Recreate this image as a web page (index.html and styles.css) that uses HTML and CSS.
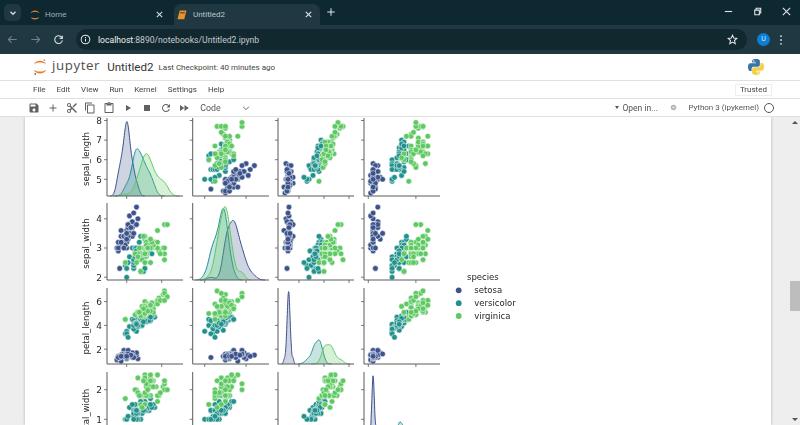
FILE: index.html
```html
<!DOCTYPE html>
<html lang="en">
<head>
    <meta charset="UTF-8">
    <title>Untitled2 - Jupyter Notebook</title>
    <link rel="stylesheet" href="styles.css">
</head>
<body>
    <!-- Browser tabs -->
    <div class="tabstrip">
        <div class="tab-search">
            <svg class="icon-sm" viewBox="0 0 12 12"><path d="M3 4.5l3 3 3-3" fill="none" stroke="#d5dcde" stroke-width="1.6"/></svg>
        </div>
        <div class="tab">
            <svg class="tab-icon" viewBox="0 0 16 16">
                <path d="M2 5.5C4 1 12 1 14 5.5 11.5 3.5 4.5 3.5 2 5.5Z" fill="#d9782d"/>
                <path d="M2 10.5C4 15 12 15 14 10.5 11.5 12.5 4.5 12.5 2 10.5Z" fill="#d9782d"/>
            </svg>
            <span class="tab-title">Home</span>
            <svg class="tab-close" viewBox="0 0 10 10"><path d="M2 2l6 6M8 2l-6 6" stroke="#d5dcde" stroke-width="1.2"/></svg>
        </div>
        <div class="tab active">
            <svg class="tab-icon" viewBox="0 0 16 16">
                <path d="M5 2h9l-3 11.5H2Z" fill="#e8912d"/>
                <path d="M6 4h6l-.5 2h-6Z" fill="#8a5218"/>
            </svg>
            <span class="tab-title">Untitled2</span>
            <svg class="tab-close" viewBox="0 0 10 10"><path d="M2 2l6 6M8 2l-6 6" stroke="#e3e8ea" stroke-width="1.2"/></svg>
        </div>
        <svg class="new-tab" viewBox="0 0 12 12"><path d="M6 1.5v9M1.5 6h9" stroke="#e3e8ea" stroke-width="1.2"/></svg>
        <div class="window-buttons">
            <svg viewBox="0 0 12 12"><path d="M2 6h8" stroke="#dfe5e7" stroke-width="1.2"/></svg>
            <svg viewBox="0 0 12 12"><path d="M3 4.5h5v5H3ZM4.5 4.5V2.500h5v5H8" fill="none" stroke="#dfe5e7" stroke-width="1.2"/></svg>
            <svg viewBox="0 0 12 12"><path d="M2 2l8 8M10 2l-8 8" stroke="#dfe5e7" stroke-width="1.2"/></svg>
        </div>
    </div>

    <!-- Browser toolbar -->
    <div class="addressbar">
        <div class="nav-buttons">
            <svg viewBox="0 0 12 12"><path d="M10.5 6h-9M5 2.500L1.500 6 5 9.500" fill="none" stroke="#71848b" stroke-width="1.2"/></svg>
            <svg viewBox="0 0 12 12"><path d="M1.500 6h9M7 2.500L10.500 6 7 9.500" fill="none" stroke="#71848b" stroke-width="1.2"/></svg>
            <svg viewBox="0 0 12 12"><path d="M9.800 4.200A4.200 4.200 0 1 0 10.200 7M10.200 1.800v3h-3" fill="none" stroke="#d5dcde" stroke-width="1.2"/></svg>
        </div>
        <div class="url-pill">
            <svg class="info" viewBox="0 0 12 12"><circle cx="6" cy="6" r="4.7" fill="none" stroke="#e3e8ea" stroke-width="1.1"/><path d="M6 5.300v3M6 3.400v1" stroke="#e3e8ea" stroke-width="1.1"/></svg>
            <span class="url"><b>localhost</b>:8890/notebooks/Untitled2.ipynb</span>
            <svg class="star" viewBox="0 0 12 12"><path d="M6 1.300l1.400 3.200 3.400.3-2.600 2.300.8 3.400L6 8.700l-3 1.800.8-3.400L1.200 4.800l3.400-.3Z" fill="none" stroke="#e3e8ea" stroke-width="1.1"/></svg>
        </div>
        <div class="avatar">U</div>
        <svg class="kebab" viewBox="0 0 4 14"><circle cx="2" cy="2.5" r="1.1"/><circle cx="2" cy="7" r="1.1"/><circle cx="2" cy="11.5" r="1.1"/></svg>
    </div>

    <!-- Notebook header -->
    <header class="nb-header">
        <svg class="jp-mark" viewBox="0 0 16 20">
            <path d="M1 7C3 1.500 13 1.500 15 7 12 4.300 4 4.300 1 7Z" fill="#f37726"/>
            <path d="M1 13C3 18.800 13 18.800 15 13 12 15.800 4 15.800 1 13Z" fill="#f37726"/>
            <circle cx="13" cy="2" r="1" fill="#9e9e9e"/>
            <circle cx="2.5" cy="18" r="1.1" fill="#767677"/>
        </svg>
        <span class="jp-word">jupyter</span>
        <span class="nb-title">Untitled2</span>
        <span class="checkpoint">Last Checkpoint: 40 minutes ago</span>
        <svg class="py-logo" viewBox="0 0 110 110">
            <path fill="#3a75a8" d="M54.900 0C26.800 0 28.600 12.200 28.600 12.200v12.600h26.800v3.800H17.900S0 26.600 0 54.800s15.600 27.200 15.600 27.200h9.300V68.900s-.5-15.600 15.400-15.600h26.500s14.900.2 14.900-14.400V14.700S84 0 54.900 0zM40.100 8.500a4.800 4.800 0 1 1 0 9.600 4.800 4.800 0 0 1 0-9.600z"/>
            <path fill="#f5cf4b" transform="rotate(180 55 55)" d="M54.900 0C26.800 0 28.600 12.200 28.600 12.200v12.600h26.800v3.800H17.900S0 26.600 0 54.800s15.600 27.200 15.600 27.200h9.300V68.900s-.5-15.600 15.400-15.600h26.500s14.900.2 14.900-14.400V14.700S84 0 54.900 0zM40.100 8.500a4.800 4.800 0 1 1 0 9.600 4.800 4.800 0 0 1 0-9.600z"/>
        </svg>
    </header>

    <nav class="menu">
        <a>File</a>
        <a>Edit</a>
        <a>View</a>
        <a>Run</a>
        <a>Kernel</a>
        <a>Settings</a>
        <a>Help</a>
        <span class="trusted">Trusted</span>
    </nav>

    <div class="nb-toolbar">
        <svg class="tool" viewBox="0 0 24 24"><path d="M17 3H5c-1.100 0-2 .9-2 2v14c0 1.100.9 2 2 2h14c1.100 0 2-.9 2-2V7l-4-4zm-5 16c-1.700 0-3-1.300-3-3s1.300-3 3-3 3 1.300 3 3-1.300 3-3 3zm3-10H5V5h10v4z"/></svg>
        <svg class="tool" viewBox="0 0 24 24"><path d="M19 13h-6v6h-2v-6H5v-2h6V5h2v6h6v2z"/></svg>
        <svg class="tool" viewBox="0 0 24 24"><path d="M9.640 7.640c.23-.5.36-1.050.36-1.640 0-2.210-1.790-4-4-4S2 3.790 2 6s1.790 4 4 4c.59 0 1.140-.13 1.640-.36L10 12l-2.360 2.360C7.140 14.130 6.590 14 6 14c-2.210 0-4 1.790-4 4s1.790 4 4 4 4-1.790 4-4c0-.59-.13-1.140-.36-1.640L12 14l7 7h3v-1L9.640 7.640zM6 8c-1.100 0-2-.89-2-2s.9-2 2-2 2 .89 2 2-.9 2-2 2zm0 12c-1.100 0-2-.89-2-2s.9-2 2-2 2 .89 2 2-.9 2-2 2zm13-17l-6 6 2 2 7-7V3h-3z"/></svg>
        <svg class="tool" viewBox="0 0 24 24"><path d="M16 1H4c-1.100 0-2 .9-2 2v14h2V3h12V1zm3 4H8c-1.100 0-2 .9-2 2v14c0 1.100.9 2 2 2h11c1.100 0 2-.9 2-2V7c0-1.100-.9-2-2-2zm0 16H8V7h11v14z"/></svg>
        <svg class="tool" viewBox="0 0 24 24"><path d="M19 2h-4.180C14.400.84 13.300 0 12 0c-1.300 0-2.400.84-2.820 2H5c-1.100 0-2 .9-2 2v16c0 1.100.9 2 2 2h14c1.100 0 2-.9 2-2V4c0-1.100-.9-2-2-2zm-7 0c.55 0 1 .45 1 1s-.45 1-1 1-1-.45-1-1 .45-1 1-1zm7 18H5V4h2v3h10V4h2v16z"/></svg>
        <svg class="tool" viewBox="0 0 24 24"><path d="M8 6v12l10-6z"/></svg>
        <svg class="tool" viewBox="0 0 24 24"><path d="M6 6h12v12H6z"/></svg>
        <svg class="tool" viewBox="0 0 24 24"><path d="M17.650 6.350C16.200 4.900 14.210 4 12 4c-4.420 0-7.990 3.580-7.990 8s3.570 8 7.990 8c3.730 0 6.840-2.550 7.730-6h-2.080c-.82 2.330-3.040 4-5.650 4-3.310 0-6-2.690-6-6s2.690-6 6-6c1.660 0 3.140.69 4.220 1.780L13 11h7V4l-2.350 2.350z"/></svg>
        <svg class="tool" viewBox="0 0 24 24"><path d="M4 18l8.500-6L4 6v12zm9-12v12l8.500-6L13 6z"/></svg>
        <span class="cell-type">Code</span>
        <svg class="cell-chevron" viewBox="0 0 12 12"><path d="M2.500 4.500L6 8l3.500-3.500" fill="none" stroke="#616161" stroke-width="1.1"/></svg>
        <span class="open-in"><i class="caret"></i>Open in...</span>
        <svg class="settings-dot" viewBox="0 0 12 12"><circle cx="6" cy="6" r="3.7" fill="#b5b5b5"/><circle cx="6" cy="6" r="1.4" fill="#e8e8e8"/></svg>
        <span class="kernel">Python 3 (ipykernel)</span>
        <span class="kernel-status"></span>
    </div>

    <!-- Notebook body -->
    <main class="nb-main">
        <div class="nb-sheet">
            <svg id="pairplot" class="pairplot" viewBox="70 117 470 308"></svg>
        </div>
        <div class="scrollbar">
            <i class="arrow up"></i>
            <div class="track"><div class="thumb"></div></div>
            <i class="arrow down"></i>
        </div>
    </main>

    <script src="plot.js"></script>
</body>
</html>
```

FILE: styles.css
```css
* {
    box-sizing: border-box;
}

html, body {
    height: 100%;
}

body {
    margin: 0;
    display: flex;
    flex-direction: column;
    overflow: hidden;
    font-family: Roboto, "Noto Sans", sans-serif;
    background-color: #fff;
    filter: blur(0.35px);
}

/* Browser tabs */
.tabstrip {
    height: 25px;
    display: flex;
    align-items: flex-end;
    padding-left: 4px;
    background-color: #0e2831;
}

.tab-search {
    width: 17px;
    height: 17px;
    margin-bottom: 4px;
    display: flex;
    align-items: center;
    justify-content: center;
    border-radius: 5px;
    background-color: #1f3842;
}

.icon-sm {
    width: 10px;
    height: 10px;
}

.tab {
    width: 145px;
    height: 21px;
    display: flex;
    align-items: center;
    padding: 0 10px 0 0;
    margin-left: 8px;
    color: #9fb0b6;
    font-size: 8px;
}

.tab + .tab {
    margin-left: 0;
}

.tab.active {
    width: 146px;
    padding: 0 7px 0 2px;
    color: #bcc8cc;
    background-color: #1f3842;
    border-radius: 7px 7px 0 0;
}

.tab-icon {
    width: 12px;
    height: 12px;
    flex: none;
}

.tab-title {
    margin-left: 4px;
    flex: 1;
}

.tab.active .tab-title {
    margin-left: 5px;
}

.tab-close {
    width: 9px;
    height: 9px;
    flex: none;
}

.new-tab {
    width: 10px;
    height: 10px;
    margin: 0 0 8px 6px;
}

.window-buttons {
    margin: 0 8px 8px auto;
    display: flex;
    gap: 18px;
}

.window-buttons svg {
    width: 11px;
    height: 11px;
}

/* Browser toolbar */
.addressbar {
    height: 29px;
    display: flex;
    align-items: center;
    background-color: #1f3842;
}

.nav-buttons {
    width: 76px;
    display: flex;
    gap: 12px;
    padding-left: 7px;
}

.nav-buttons svg {
    width: 11px;
    height: 11px;
}

.url-pill {
    width: 671px;
    height: 21px;
    display: flex;
    align-items: center;
    padding: 0 9px 0 4px;
    border-radius: 11px;
    background-color: #11282f;
}

.info {
    width: 11px;
    height: 11px;
}

.url {
    margin-left: 7px;
    flex: 1;
    color: #c2cccf;
    font-size: 8.6px;
}

.url b {
    font-weight: 400;
    color: #eef1f2;
}

.star {
    width: 11px;
    height: 11px;
}

.avatar {
    width: 13px;
    height: 13px;
    margin-left: 10px;
    border-radius: 50%;
    background-color: #0b7fd4;
    color: #dff1ff;
    font-size: 7px;
    line-height: 13px;
    text-align: center;
}

.kebab {
    width: 4px;
    height: 12px;
    margin-left: 9px;
    fill: #cfd8db;
}

/* Notebook header */
.nb-header {
    height: 27px;
    display: flex;
    align-items: center;
    padding-left: 33px;
    border-bottom: 1px solid #e0e0e0;
    background-color: #fff;
}

.jp-mark {
    width: 14px;
    height: 18px;
    flex: none;
}

.jp-word {
    margin: -3px 0 0 5px;
    color: #4e4e4e;
    font-family: "Open Sans", sans-serif;
    font-size: 13.3px;
    letter-spacing: 0.6px;
    line-height: 1;
}

.nb-title {
    margin-left: 7px;
    color: #333;
    font-size: 11.6px;
}

.checkpoint {
    margin-left: 5px;
    color: #444;
    font-size: 8px;
}

.py-logo {
    width: 16px;
    height: 16px;
    margin-left: auto;
    margin-right: 36px;
}

.menu {
    height: 18px;
    display: flex;
    align-items: center;
    gap: 11px;
    padding: 0 28px 0 33px;
    border-bottom: 1px solid #e0e0e0;
    color: #444;
    font-size: 8px;
}

.trusted {
    margin-left: auto;
    padding: 0 4px;
    height: 12px;
    line-height: 10px;
    border: 1px solid #eee;
    color: #444;
}

.nb-toolbar {
    height: 18px;
    display: flex;
    align-items: center;
    padding: 0 26px 0 28px;
    border-bottom: 1px solid #e0e0e0;
    color: #555;
    font-size: 8.5px;
    flex: none;
}

.tool {
    width: 12px;
    height: 12px;
    margin-right: 6.8px;
    flex: none;
    fill: #616161;
}

.cell-type {
    margin-left: 3px;
    width: 41px;
    font-size: 8.8px;
}

.cell-chevron {
    width: 10px;
    height: 10px;
}

.open-in {
    margin-left: auto;
    display: flex;
    align-items: center;
}

.caret {
    width: 0;
    height: 0;
    margin-right: 3px;
    border: 2.5px solid transparent;
    border-top: 3px solid #555;
    border-bottom: 0;
}

.settings-dot {
    width: 9px;
    height: 9px;
    margin-left: 11.5px;
}

.kernel {
    margin-left: 10px;
    color: #555;
    font-size: 8px;
}

.kernel-status {
    width: 10px;
    height: 10px;
    margin-left: 5px;
    border: 1px solid #555;
    border-radius: 50%;
}

/* Notebook body */
.nb-main {
    flex: 1;
    min-height: 0;
    display: flex;
    overflow: hidden;
    background-color: #eee;
}

.nb-sheet {
    width: 746px;
    margin-left: 25px;
    padding-left: 45px;
    background-color: #fff;
    box-shadow: 0 0 3px rgba(0, 0, 0, 0.25);
}

.pairplot {
    display: block;
    width: 470px;
    height: 308px;
}

.spine {
    stroke: #5a5a5a;
    stroke-width: 1;
    fill: none;
}

.tick-mark {
    stroke: #5a5a5a;
    stroke-width: 0.8;
}

.plot-text {
    fill: #262626;
    font-family: "DejaVu Sans", sans-serif;
    font-size: 8.5px;
}

.tick-label {
    font-size: 9px;
    text-anchor: end;
}

.scrollbar {
    width: 10px;
    margin-left: auto;
    display: flex;
    flex-direction: column;
    align-items: center;
    padding: 4px 0;
}

.track {
    flex: 1;
    width: 100%;
    padding-top: 157px;
}

.thumb {
    height: 30px;
    background-color: #bdbdbd;
}

.arrow {
    width: 0;
    height: 0;
    border: 3px solid transparent;
}

.arrow.up {
    border-top: 0;
    border-bottom: 3px solid #555;
}

.arrow.down {
    border-bottom: 0;
    border-top: 3px solid #555;
}
```

FILE: plot.js
```js
// iris measurements: sepal_length, sepal_width, petal_length, petal_width
const setosa = [[5.1,3.5,1.4,0.2],[4.9,3.0,1.4,0.2],[4.7,3.2,1.3,0.2],[4.6,3.1,1.5,0.2],[5.0,3.6,1.4,0.2],[5.4,3.9,1.7,0.4],[4.6,3.4,1.4,0.3],[5.0,3.4,1.5,0.2],[4.4,2.9,1.4,0.2],[4.9,3.1,1.5,0.1],[5.4,3.7,1.5,0.2],[4.8,3.4,1.6,0.2],[4.8,3.0,1.4,0.1],[4.3,3.0,1.1,0.1],[5.8,4.0,1.2,0.2],[5.7,4.4,1.5,0.4],[5.4,3.9,1.3,0.4],[5.1,3.5,1.4,0.3],[5.7,3.8,1.7,0.3],[5.1,3.8,1.5,0.3],[5.4,3.4,1.7,0.2],[5.1,3.7,1.5,0.4],[4.6,3.6,1.0,0.2],[5.1,3.3,1.7,0.5],[4.8,3.4,1.9,0.2],[5.0,3.0,1.6,0.2],[5.0,3.4,1.6,0.4],[5.2,3.5,1.5,0.2],[5.2,3.4,1.4,0.2],[4.7,3.2,1.6,0.2],[4.8,3.1,1.6,0.2],[5.4,3.4,1.5,0.4],[5.2,4.1,1.5,0.1],[5.5,4.2,1.4,0.2],[4.9,3.1,1.5,0.1],[5.0,3.2,1.2,0.2],[5.5,3.5,1.3,0.2],[4.9,3.1,1.5,0.1],[4.4,3.0,1.3,0.2],[5.1,3.4,1.5,0.2],[5.0,3.5,1.3,0.3],[4.5,2.3,1.3,0.3],[4.4,3.2,1.3,0.2],[5.0,3.5,1.6,0.6],[5.1,3.8,1.9,0.4],[4.8,3.0,1.4,0.3],[5.1,3.8,1.6,0.2],[4.6,3.2,1.4,0.2],[5.3,3.7,1.5,0.2],[5.0,3.3,1.4,0.2]];
const versicolor = [[7.0,3.2,4.7,1.4],[6.4,3.2,4.5,1.5],[6.9,3.1,4.9,1.5],[5.5,2.3,4.0,1.3],[6.5,2.8,4.6,1.5],[5.7,2.8,4.5,1.3],[6.3,3.3,4.7,1.6],[4.9,2.4,3.3,1.0],[6.6,2.9,4.6,1.3],[5.2,2.7,3.9,1.4],[5.0,2.0,3.5,1.0],[5.9,3.0,4.2,1.5],[6.0,2.2,4.0,1.0],[6.1,2.9,4.7,1.4],[5.6,2.9,3.6,1.3],[6.7,3.1,4.4,1.4],[5.6,3.0,4.5,1.5],[5.8,2.7,4.1,1.0],[6.2,2.2,4.5,1.5],[5.6,2.5,3.9,1.1],[5.9,3.2,4.8,1.8],[6.1,2.8,4.0,1.3],[6.3,2.5,4.9,1.5],[6.1,2.8,4.7,1.2],[6.4,2.9,4.3,1.3],[6.6,3.0,4.4,1.4],[6.8,2.8,4.8,1.4],[6.7,3.0,5.0,1.7],[6.0,2.9,4.5,1.5],[5.7,2.6,3.5,1.0],[5.5,2.4,3.8,1.1],[5.5,2.4,3.7,1.0],[5.8,2.7,3.9,1.2],[6.0,2.7,5.1,1.6],[5.4,3.0,4.5,1.5],[6.0,3.4,4.5,1.6],[6.7,3.1,4.7,1.5],[6.3,2.3,4.4,1.3],[5.6,3.0,4.1,1.3],[5.5,2.5,4.0,1.3],[5.5,2.6,4.4,1.2],[6.1,3.0,4.6,1.4],[5.8,2.6,4.0,1.2],[5.0,2.3,3.3,1.0],[5.6,2.7,4.2,1.3],[5.7,3.0,4.2,1.2],[5.7,2.9,4.2,1.3],[6.2,2.9,4.3,1.3],[5.1,2.5,3.0,1.1],[5.7,2.8,4.1,1.3]];
const virginica = [[6.3,3.3,6.0,2.5],[5.8,2.7,5.1,1.9],[7.1,3.0,5.9,2.1],[6.3,2.9,5.6,1.8],[6.5,3.0,5.8,2.2],[7.6,3.0,6.6,2.1],[4.9,2.5,4.5,1.7],[7.3,2.9,6.3,1.8],[6.7,2.5,5.8,1.8],[7.2,3.6,6.1,2.5],[6.5,3.2,5.1,2.0],[6.4,2.7,5.3,1.9],[6.8,3.0,5.5,2.1],[5.7,2.5,5.0,2.0],[5.8,2.8,5.1,2.4],[6.4,3.2,5.3,2.3],[6.5,3.0,5.5,1.8],[7.7,3.8,6.7,2.2],[7.7,2.6,6.9,2.3],[6.0,2.2,5.0,1.5],[6.9,3.2,5.7,2.3],[5.6,2.8,4.9,2.0],[7.7,2.8,6.7,2.0],[6.3,2.7,4.9,1.8],[6.7,3.3,5.7,2.1],[7.2,3.2,6.0,1.8],[6.2,2.8,4.8,1.8],[6.1,3.0,4.9,1.8],[6.4,2.8,5.6,2.1],[7.2,3.0,5.8,1.6],[7.4,2.8,6.1,1.9],[7.9,3.8,6.4,2.0],[6.4,2.8,5.6,2.2],[6.3,2.8,5.1,1.5],[6.1,2.6,5.6,1.4],[7.7,3.0,6.1,2.3],[6.3,3.4,5.6,2.4],[6.4,3.1,5.5,1.8],[6.0,3.0,4.8,1.8],[6.9,3.1,5.4,2.1],[6.7,3.1,5.6,2.4],[6.9,3.1,5.1,2.3],[5.8,2.7,5.1,1.9],[6.8,3.2,5.9,2.3],[6.7,3.3,5.7,2.5],[6.7,3.0,5.2,2.3],[6.3,2.5,5.0,1.9],[6.5,3.0,5.2,2.0],[6.2,3.4,5.4,2.3],[5.9,3.0,5.1,1.8]];

const species = [
    { name: 'setosa', color: '#3b528b', rows: setosa },
    { name: 'versicolor', color: '#21918c', rows: versicolor },
    { name: 'virginica', color: '#5ec962', rows: virginica }
];

const names = ['sepal_length', 'sepal_width', 'petal_length', 'petal_width'];

// Pixel scales for each variable, read off the tick marks
const xAxes = [
    { from: 107, to: 183, ticks: [5, 7.5], pos: v => 126.7 + (v - 5) * 14 },
    { from: 192.7, to: 269, ticks: [2, 4], pos: v => 204.7 + (v - 2) * 20.7 },
    { from: 278, to: 354, ticks: [2.5, 5, 7.5], pos: v => 299 + (v - 2.5) * 10 },
    { from: 364, to: 440, ticks: [0, 2], pos: v => 368.3 + v * 23.8 }
];

const yAxes = [
    { from: 118, to: 196, ticks: [5, 6, 7, 8], pos: v => 179.3 - (v - 5) * 19.6 },
    { from: 203, to: 280, ticks: [2, 3, 4], pos: v => 248 - (v - 3) * 29.2 },
    { from: 288, to: 364, ticks: [2, 4, 6], pos: v => 325.4 - (v - 4) * 11.9 },
    { from: 372, to: 451, ticks: [1, 2], pos: v => 419.3 - (v - 1) * 29.6 }
];

function bandwidth(values) {
    const mean = values.reduce((a, b) => a + b, 0) / values.length;
    const variance = values.reduce((a, b) => a + (b - mean) ** 2, 0) / (values.length - 1);
    return Math.sqrt(variance) * Math.pow(values.length, -0.2);
}

function kde(values) {
    const bw = bandwidth(values);
    const low = Math.min(...values) - 3 * bw;
    const high = Math.max(...values) + 3 * bw;
    const points = [];
    for (let i = 0; i <= 100; i++) {
        const x = low + (high - low) * i / 100;
        let sum = 0;
        values.forEach(v => {
            sum += Math.exp(-0.5 * ((x - v) / bw) ** 2);
        });
        points.push([x, sum / (values.length * bw * Math.sqrt(2 * Math.PI))]);
    }
    return points;
}

function drawDiagonal(index) {
    const xAxis = xAxes[index];
    const yAxis = yAxes[index];
    const curves = species.map(s => ({ color: s.color, points: kde(s.rows.map(r => r[index])) }));
    const peak = Math.max(...curves.flatMap(c => c.points.map(p => p[1])));
    const scale = (yAxis.to - yAxis.from) / (peak * 1.05);

    let out = '';
    curves.forEach(c => {
        const line = c.points.map(p => `${xAxis.pos(p[0]).toFixed(1)},${(yAxis.to - p[1] * scale).toFixed(1)}`).join(' ');
        out += `<polygon points="${line}" fill="${c.color}" fill-opacity="0.25" stroke="none"/>`;
        out += `<polyline points="${line}" fill="none" stroke="${c.color}" stroke-width="1"/>`;
    });
    return out;
}

function drawScatter(col, row) {
    let out = '';
    species.forEach(s => {
        s.rows.forEach(r => {
            const cx = xAxes[col].pos(r[col]).toFixed(1);
            const cy = yAxes[row].pos(r[row]).toFixed(1);
            out += `<circle cx="${cx}" cy="${cy}" r="2.8" fill="${s.color}" stroke="#fff" stroke-width="0.5"/>`;
        });
    });
    return out;
}

function drawFrame(col, row) {
    const xAxis = xAxes[col];
    const yAxis = yAxes[row];
    let out = `<path class="spine" d="M${xAxis.from} ${yAxis.from}V${yAxis.to}H${xAxis.to}"/>`;
    yAxis.ticks.forEach(t => {
        const y = yAxis.pos(t).toFixed(1);
        out += `<path class="tick-mark" d="M${xAxis.from - 3} ${y}H${xAxis.from}"/>`;
        if (col === 0) {
            out += `<text class="plot-text tick-label" x="${xAxis.from - 5}" y="${(yAxis.pos(t) + 3.3).toFixed(1)}">${t}</text>`;
        }
    });
    xAxis.ticks.forEach(t => {
        const x = xAxis.pos(t).toFixed(1);
        out += `<path class="tick-mark" d="M${x} ${yAxis.to}V${yAxis.to + 3}"/>`;
    });
    return out;
}

function drawLegend() {
    let out = '<text class="plot-text" x="467" y="280">species</text>';
    species.forEach((s, i) => {
        const y = 290.3 + i * 12.85;
        out += `<circle cx="458.7" cy="${y}" r="2.9" fill="${s.color}"/>`;
        out += `<text class="plot-text" x="474.3" y="${y + 3}">${s.name}</text>`;
    });
    return out;
}

let svg = '';
names.forEach((name, row) => {
    const mid = (yAxes[row].from + yAxes[row].to) / 2 + 2;
    svg += `<text class="plot-text" text-anchor="middle" transform="translate(89 ${mid}) rotate(-90)">${name}</text>`;
    names.forEach((_, col) => {
        svg += row === col ? drawDiagonal(row) : drawScatter(col, row);
        svg += drawFrame(col, row);
    });
});
svg += drawLegend();

document.getElementById('pairplot').innerHTML = svg;
```
